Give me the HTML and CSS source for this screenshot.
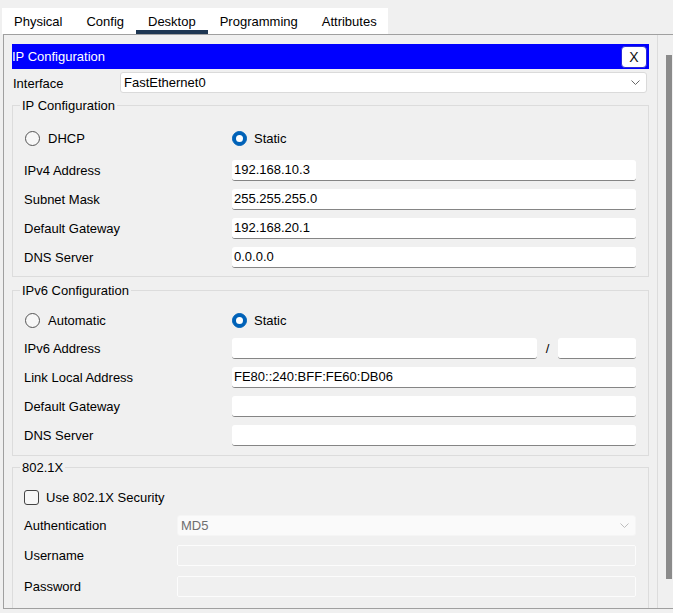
FILE: index.html
```html
<!DOCTYPE html>
<html>
<head>
<meta charset="utf-8">
<link rel="stylesheet" href="styles.css">
</head>
<body>
<div class="tabs">
  <div class="tab">Physical</div>
  <div class="tab">Config</div>
  <div class="tab active">Desktop</div>
  <div class="tab">Programming</div>
  <div class="tab">Attributes</div>
</div>
<div class="frame">
  <div class="main">
    <div class="titlebar">
      <span class="title">IP Configuration</span>
      <button class="close">X</button>
    </div>
    <div class="iface">
      <span class="iface-label">Interface</span>
      <div class="select">
        <span>FastEthernet0</span>
        <svg class="chev" width="9" height="5" viewBox="0 0 9 5"><path d="M0.5 0.5 L4.5 4.5 L8.5 0.5" fill="none" stroke="#666" stroke-width="1"/></svg>
      </div>
    </div>

    <fieldset class="group g4">
      <legend>IP Configuration</legend>
      <div class="radios">
        <label class="opt"><span class="radio"></span>DHCP</label>
        <label class="opt"><span class="radio on"></span>Static</label>
      </div>
      <div class="row first"><span class="lbl">IPv4 Address</span><div class="field">192.168.10.3</div></div>
      <div class="row"><span class="lbl">Subnet Mask</span><div class="field">255.255.255.0</div></div>
      <div class="row"><span class="lbl">Default Gateway</span><div class="field">192.168.20.1</div></div>
      <div class="row"><span class="lbl">DNS Server</span><div class="field">0.0.0.0</div></div>
    </fieldset>

    <fieldset class="group g6">
      <legend>IPv6 Configuration</legend>
      <div class="radios">
        <label class="opt"><span class="radio"></span>Automatic</label>
        <label class="opt"><span class="radio on"></span>Static</label>
      </div>
      <div class="row first"><span class="lbl">IPv6 Address</span><div class="field addr6"></div><span class="slash">/</span><div class="field prefix"></div></div>
      <div class="row"><span class="lbl">Link Local Address</span><div class="field">FE80::240:BFF:FE60:DB06</div></div>
      <div class="row"><span class="lbl">Default Gateway</span><div class="field"></div></div>
      <div class="row"><span class="lbl">DNS Server</span><div class="field"></div></div>
    </fieldset>

    <fieldset class="group gx">
      <legend>802.1X</legend>
      <label class="check"><span class="box"></span>Use 802.1X Security</label>
      <div class="row r1"><span class="lbl lbl-x">Authentication</span>
        <div class="field dis-select"><span>MD5</span>
          <svg class="chev" width="9" height="5" viewBox="0 0 9 5"><path d="M0.5 0.5 L4.5 4.5 L8.5 0.5" fill="none" stroke="#bdbdbd" stroke-width="1"/></svg>
        </div>
      </div>
      <div class="row r2"><span class="lbl lbl-x">Username</span><div class="field dis"></div></div>
      <div class="row r3"><span class="lbl lbl-x">Password</span><div class="field dis"></div></div>
    </fieldset>
  </div>
  <div class="scroll"><div class="thumb"></div></div>
</div>
</body>
</html>
```

FILE: styles.css
```css
* { box-sizing: border-box; }
html, body { margin: 0; padding: 0; }
body {
  background: #f0f0f0;
  font-family: "Liberation Sans", Arial, sans-serif;
  font-size: 13px;
  color: #000;
  width: 673px;
  height: 613px;
  overflow: hidden;
}

.tabs {
  display: flex;
  margin-left: 2px;
  margin-top: 8px;
  width: 386px;
  height: 26px;
  background: #fff;
}
.tab {
  padding: 1px 12px 0;
  line-height: 25px;
  height: 26px;
  white-space: nowrap;
}
.tab.active {
  border-bottom: 4px solid #1d3652;
}

.frame {
  display: flex;
  margin-left: 3px;
  height: 575px;
  border-top: 1px solid #a0a0a0;
  border-left: 1px solid #a0a0a0;
  border-bottom: 1px solid #a0a0a0;
}
.main {
  width: 654px;
  padding: 9px 8px 0 8px;
  border-right: 1px solid #dcdcdc;
  overflow: hidden;
}
.scroll {
  flex: 1;
  padding: 20px 0 0 8px;
}
.thumb {
  width: 6px;
  height: 524px;
  background: #8b8b8b;
}

.titlebar {
  display: flex;
  align-items: center;
  justify-content: space-between;
  height: 25px;
  width: 637px;
  background: #0000ff;
  color: #fff;
}
.title { line-height: 25px; }
.close {
  width: 26px;
  height: 22px;
  margin-right: 2px;
  padding: 0;
  background: #fff;
  border: 1px solid #2b2bd6;
  border-radius: 4px;
  font-family: "Liberation Sans", Arial, sans-serif;
  font-size: 14px;
  color: #111;
}

.iface {
  display: flex;
  align-items: center;
  margin-top: 3px;
  height: 21px;
}
.iface-label {
  width: 108px;
  padding-left: 1px;
  padding-top: 1px;
}
.select {
  width: 527px;
  height: 21px;
  display: flex;
  align-items: center;
  justify-content: space-between;
  padding: 0 6px 0 3px;
  background: #fff;
  border: 1px solid #dadada;
  border-radius: 3px;
}
.chev { display: block; }

.group {
  margin: 5px 0 0 0;
  min-inline-size: 0;
  width: 637px;
  border: 1px solid #dcdcdc;
  padding: 15px 12px 8px 11px;
}
.group legend {
  padding: 0 2px;
  margin-left: -4px;
  line-height: 15px;
}
.g6 { margin-top: 6px; padding-top: 12px; padding-bottom: 9px; }
.gx { margin-top: 4px; padding-top: 12px; padding-bottom: 20px; }

.radios {
  display: flex;
  height: 20px;
  align-items: center;
}
.opt {
  display: flex;
  align-items: center;
  width: 208px;
}
.radio {
  width: 15px;
  height: 15px;
  border-radius: 50%;
  border: 1px solid #555;
  background: #f7f7f7;
  margin: 0 8px 0 1px;
  display: flex;
  align-items: center;
  justify-content: center;
}
.opt + .opt .radio { margin-left: 0; margin-right: 7px; }
.radio.on {
  background: #0062b8;
  border-color: #0062b8;
}
.radio.on::after {
  content: "";
  width: 7px;
  height: 7px;
  border-radius: 50%;
  background: #fff;
}

.row {
  display: flex;
  align-items: center;
  height: 21px;
  margin-top: 8px;
}
.g4 .row.first { margin-top: 12px; }
.g6 .row.first { margin-top: 8px; }
.lbl { width: 208px; flex: none; }
.lbl-x { width: 153px; }
.field {
  flex: 1;
  height: 21px;
  line-height: 20px;
  padding-left: 2px;
  background: #fff;
  border-bottom: 1px solid #858585;
  border-radius: 3px;
  white-space: nowrap;
}
.field.addr6 { flex: none; width: 305px; }
.slash { width: 21px; text-align: center; flex: none; }
.field.prefix { flex: none; width: 78px; }

.check {
  display: flex;
  align-items: center;
  height: 20px;
}
.box {
  width: 15px;
  height: 15px;
  border: 1px solid #444;
  border-radius: 3px;
  background: #f7f7f7;
  margin-right: 7px;
}
.row.r1 { margin-top: 8px; }
.row.r2 { margin-top: 9px; }
.row.r3 { margin-top: 10px; }
.dis-select {
  display: flex;
  align-items: center;
  justify-content: space-between;
  padding: 0 6px 0 3px;
  background: #fafafa;
  border: 1px solid #f5f5f5;
  color: #6f6f6f;
}
.dis {
  background: #f0f0f0;
  border: 1px solid #fcfcfc;
  border-radius: 2px;
}
```
